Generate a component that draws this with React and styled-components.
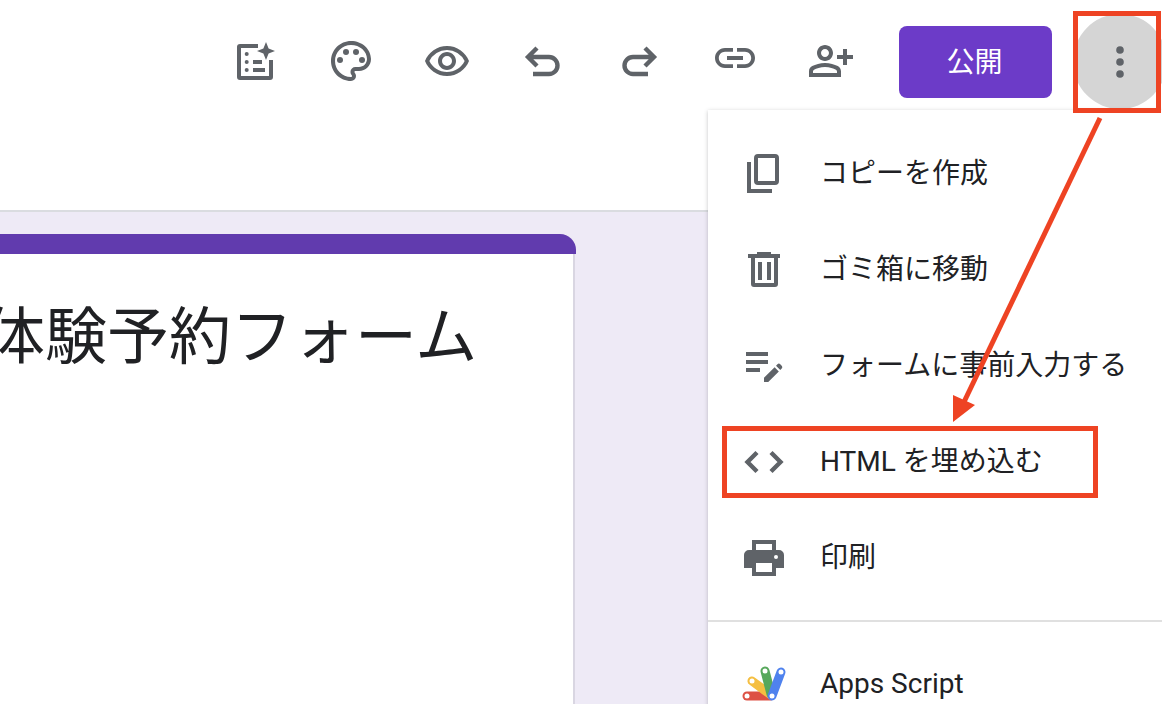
import React from "react";
import styled, { createGlobalStyle } from "styled-components";
import {
  MdOutlinePalette,
  MdOutlineRemoveRedEye,
  MdOutlinePersonAddAlt,
  MdOutlineEditNote,
} from "react-icons/md";

const GlobalStyle = createGlobalStyle`
  html, body {
    margin: 0;
    padding: 0;
    background: #fff;
  }
  body {
    font-family: Roboto, "Noto Sans CJK JP", sans-serif;
    color: #202124;
  }
`;

const Page = styled.div`
  position: relative;
  width: 1162px;
  height: 704px;
  overflow: hidden;
  display: flex;
  flex-direction: column;
  background: #fff;
`;

const Toolbar = styled.header`
  height: 110px;
  flex: none;
  display: flex;
  align-items: center;
  justify-content: flex-end;
  padding: 12px 0 0;
  box-sizing: border-box;
  margin-right: -5px;
`;

const IconGroup = styled.div`
  display: flex;
  margin-right: 20px;
`;

const IconButton = styled.button`
  width: 96px;
  height: 96px;
  padding: 0;
  border: 0;
  background: transparent;
  color: #5f6368;
  display: flex;
  align-items: center;
  justify-content: center;
`;

const MoreButton = styled(IconButton)`
  width: 94px;
  height: 95px;
  border-radius: 50%;
  background: #d5d5d5;
`;

const PublishButton = styled.button`
  width: 153px;
  height: 72px;
  margin: 2px 21px 0 0;
  padding: 0 2px 4px 0;
  border: 0;
  border-radius: 8px;
  background: #6c3bc8;
  color: #fff;
  font: 400 28px Roboto, "Noto Sans CJK JP", sans-serif;
`;

const TabStrip = styled.div`
  height: 100px;
  flex: none;
  border-bottom: 2px solid #dadce0;
`;

const Main = styled.main`
  flex: 1;
  min-height: 0;
  background: #eeeaf6;
  padding-top: 22px;
`;

const Card = styled.section`
  width: 676px;
  height: 600px;
  margin-left: -100px;
  display: flex;
  flex-direction: column;
`;

const CardAccent = styled.div`
  height: 20px;
  flex: none;
  background: #613bae;
  border-top-right-radius: 16px;
`;

const CardBody = styled.div`
  flex: 1;
  margin-right: 1px;
  background: #fff;
  border-right: 2px solid #d9d6e2;
`;

const FormTitle = styled.h1`
  margin: 0;
  padding: 44px 0 0 83px;
  font-size: 62px;
  line-height: 80px;
  font-weight: 400;
  white-space: nowrap;
  color: #202124;
`;

const Menu = styled.nav`
  position: absolute;
  top: 110px;
  left: 708px;
  right: 0;
  bottom: -40px;
  padding-top: 14px;
  background: #fff;
  box-shadow: 0 1px 4px rgba(60, 64, 67, 0.3);
`;

const MenuRow = styled.div`
  height: 96px;
  display: flex;
  align-items: center;
  gap: 32px;
  padding-left: 32px;
  font-size: 28px;
  white-space: nowrap;
  color: #202124;
`;

const MenuLabel = styled.span`
  margin-top: -2px;
`;

const MenuIcon = styled.span`
  width: 48px;
  height: 48px;
  flex: none;
  color: #5f6368;
  display: flex;
  align-items: center;
  justify-content: center;
`;

const MenuDivider = styled.hr`
  height: 2px;
  margin: 16px 0 14px;
  border: 0;
  background: #e0e0e0;
`;

const Highlight = styled.div`
  position: absolute;
  box-sizing: border-box;
  border: 5px solid #ee4323;
  left: ${(p) => p.$left}px;
  top: ${(p) => p.$top}px;
  width: ${(p) => p.$width}px;
  height: ${(p) => p.$height}px;
`;

const ArrowLayer = styled.svg`
  position: absolute;
  left: 0;
  top: 0;
`;

const FormAiIcon = () => (
  <svg width="48" height="48" viewBox="0 0 48 48" fill="currentColor">
    <path d="M9 7h18v4H10v28h28V23h4v17a3 3 0 0 1-3 3H9a3 3 0 0 1-3-3V10a3 3 0 0 1 3-3z" />
    <path d="M35 5l2.600 6.400L44 14l-6.400 2.600L35 23l-2.600-6.400L26 14l6.400-2.600z" />
    <circle cx="15.700" cy="17" r="2" />
    <circle cx="15.700" cy="25" r="2" />
    <circle cx="15.700" cy="33" r="2" />
    <rect x="22" y="23" width="9" height="4" />
    <rect x="22" y="31" width="12" height="4" />
  </svg>
);

const StrokeIcon = ({ d }) => (
  <svg width="48" height="48" viewBox="0 0 48 48" fill="none" stroke="currentColor" strokeWidth="4.400">
    <path d={d} />
  </svg>
);

const LinkIcon = () => (
  <svg width="48" height="48" viewBox="0 1.500 24 24" fill="currentColor">
    <path d="M3.900 12c0-1.710 1.390-3.100 3.100-3.100h4V7H7c-2.760 0-5 2.240-5 5s2.240 5 5 5h4v-1.900H7c-1.710 0-3.100-1.390-3.100-3.100zM8 13h8v-2H8v2zm9-6h-4v1.900h4c1.710 0 3.100 1.390 3.100 3.100s-1.390 3.100-3.100 3.100h-4V17h4c2.760 0 5-2.240 5-5s-2.240-5-5-5z" />
  </svg>
);

const MoreIcon = () => (
  <svg width="48" height="48" viewBox="0 0 48 48" fill="currentColor">
    <circle cx="24" cy="13" r="3.800" />
    <circle cx="24" cy="25" r="3.800" />
    <circle cx="24" cy="37" r="3.800" />
  </svg>
);

const CopyIcon = () => (
  <svg width="48" height="48" viewBox="0 0 48 48" fill="none" stroke="currentColor" strokeWidth="4">
    <rect x="16" y="8" width="21" height="27" rx="2" />
    <path d="M9 14v29h23" />
  </svg>
);

const TrashIcon = () => (
  <svg width="48" height="48" viewBox="0 0 48 48" fill="currentColor">
    <path d="M17 8h14v2h9v4H8v-4h9z" />
    <path d="M11 14v26a3 3 0 0 0 3 3h21a3 3 0 0 0 3-3V14h-4v25H15V14z" />
    <rect x="18" y="18" width="4" height="18" />
    <rect x="27" y="18" width="4" height="18" />
  </svg>
);

const PrintIcon = () => (
  <svg width="48" height="48" viewBox="0 0 48 48" fill="currentColor">
    <path
      fillRule="evenodd"
      d="M12 8h24v10h3a5 5 0 0 1 5 5v13h-8v8H12v-8H4V23a5 5 0 0 1 5-5h3zM16 12v6h16v-6zM16 31v9h16v-9z"
    />
    <circle cx="36" cy="25" r="2" fill="#fff" />
  </svg>
);

const AppsScriptLogo = () => (
  <svg width="48" height="48" viewBox="0 0 48 48" fill="none" strokeWidth="9" strokeLinecap="round">
    <path d="M7 36H30" stroke="#dd5144" />
    <path d="M12 21L31 35" stroke="#f5bf42" />
    <path d="M25 11L31 34" stroke="#57a85c" />
    <path d="M41 12L32 36" stroke="#4f82ee" />
    <g fill="#fff">
      <circle cx="7" cy="36" r="2.500" />
      <circle cx="12" cy="21" r="2.500" />
      <circle cx="25" cy="11" r="2.500" />
      <circle cx="41" cy="12" r="2.500" />
      <circle cx="32" cy="36" r="2.500" />
    </g>
  </svg>
);

const menuItems = [
  { label: "コピーを作成", icon: <CopyIcon /> },
  { label: "ゴミ箱に移動", icon: <TrashIcon /> },
  { label: "フォームに事前入力する", icon: <MdOutlineEditNote size={48} /> },
  { label: "HTML を埋め込む", icon: <StrokeIcon d="M17 16.500L7.500 26L17 35.500M31 16.500L40.500 26L31 35.500" /> },
  { label: "印刷", icon: <PrintIcon /> },
];

export default function App() {
  return (
    <Page>
      <GlobalStyle />
      <Toolbar>
        <IconGroup>
          <IconButton><FormAiIcon /></IconButton>
          <IconButton><MdOutlinePalette size={48} /></IconButton>
          <IconButton><MdOutlineRemoveRedEye size={48} /></IconButton>
          <IconButton><StrokeIcon d="M18 11L9 20L18 29M9 20H30a8.500 8.500 0 0 1 0 17H14" /></IconButton>
          <IconButton><StrokeIcon d="M30 11L39 20L30 29M39 20H18a8.500 8.500 0 0 0 0 17H33" /></IconButton>
          <IconButton><LinkIcon /></IconButton>
          <IconButton><MdOutlinePersonAddAlt size={48} /></IconButton>
        </IconGroup>
        <PublishButton>公開</PublishButton>
        <MoreButton><MoreIcon /></MoreButton>
      </Toolbar>
      <TabStrip />
      <Main>
        <Card>
          <CardAccent />
          <CardBody>
            <FormTitle>体験予約フォーム</FormTitle>
          </CardBody>
        </Card>
      </Main>
      <Menu>
        {menuItems.map((item) => (
          <MenuRow key={item.label}>
            <MenuIcon>{item.icon}</MenuIcon>
            <MenuLabel>{item.label}</MenuLabel>
          </MenuRow>
        ))}
        <MenuDivider />
        <MenuRow>
          <MenuIcon><AppsScriptLogo /></MenuIcon>
          <MenuLabel>Apps Script</MenuLabel>
        </MenuRow>
      </Menu>
      <Highlight $left={1073} $top={11} $width={88} $height={102} />
      <Highlight $left={722} $top={426} $width={376} $height={72} />
      <ArrowLayer width="1162" height="704" viewBox="0 0 1162 704">
        <path d="M1100 118L964 402" stroke="#ee4323" strokeWidth="5" fill="none" />
        <path d="M953 422L953 395L975 405z" fill="#ee4323" />
      </ArrowLayer>
    </Page>
  );
}
